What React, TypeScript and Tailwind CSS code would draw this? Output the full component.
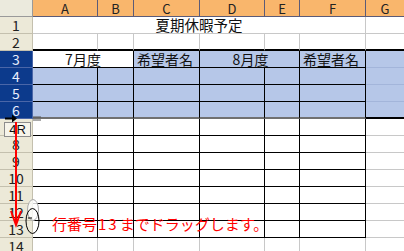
import React from 'react';

const font = "font-['Noto_Sans_CJK_JP','Liberation_Sans',sans-serif]";

function RowHead({ n, sel }: { n: number; sel?: boolean }) {
  return (
    <div
      className={
        sel
          ? 'flex items-center justify-center bg-[#0c3a8c] text-[#e8eefc] text-[14px] leading-none border-r border-b border-[#4a66a8]'
          : 'flex items-center justify-center bg-[#ece9d8] text-[#222] text-[14px] leading-none border-r border-b border-[#c4c0ae]'
      }
    >
      {n}
    </div>
  );
}

function ColHead({ label, last }: { label: string; last?: boolean }) {
  return (
    <div
      className={
        last
          ? 'flex items-center justify-center bg-[#f9b66c] text-[#222] text-[13px] leading-none border-b border-[#5b5b78]'
          : 'flex items-center justify-center bg-[#f9b66c] text-[#222] text-[13px] leading-none border-r border-b border-[#5b5b78]'
      }
    >
      {label}
    </div>
  );
}

export default function App() {
  const tableRows = [7, 8, 9, 10, 11, 12, 13];

  return (
    <div className={`relative w-[404px] h-[251px] overflow-hidden bg-white ${font}`}>
      <div className="grid grid-cols-[33px_65px_36px_66px_65px_35px_66px_38px] auto-rows-[17px]">
        {/* header */}
        <div className="bg-[#ebeadd] border-r border-b border-[#9a9a9a]" />
        <ColHead label="A" />
        <ColHead label="B" />
        <ColHead label="C" />
        <ColHead label="D" />
        <ColHead label="E" />
        <ColHead label="F" />
        <ColHead label="G" last />

        {/* row 1 */}
        <RowHead n={1} />
        <div className="col-span-6 flex items-center justify-center pt-[1px] text-[14.5px] leading-none text-[#111] border-r border-b border-[#c8c8c8]">
          夏期休暇予定
        </div>
        <div className="border-b border-[#c8c8c8]" />

        {/* row 2 */}
        <RowHead n={2} />
        <div className="border-r border-b-2 border-r-[#c8c8c8] border-b-black" />
        <div className="border-r border-b-2 border-r-[#c8c8c8] border-b-black" />
        <div className="border-r border-b-2 border-r-[#c8c8c8] border-b-black" />
        <div className="border-r border-b-2 border-r-[#c8c8c8] border-b-black" />
        <div className="border-r border-b-2 border-r-[#c8c8c8] border-b-black" />
        <div className="border-r border-b-2 border-r-[#c8c8c8] border-b-black" />
        <div className="border-b-2 border-b-black" />

        {/* row 3 */}
        <RowHead n={3} sel />
        <div className="col-span-2 flex items-center justify-center text-[14px] leading-none text-[#111] bg-white border-r border-b border-black">
          7月度
        </div>
        <div className="flex items-center pl-[3px] text-[14px] leading-none text-[#111] bg-[#b6c7e8] border-r border-b border-black">
          希望者名
        </div>
        <div className="col-span-2 flex items-center justify-center pl-[2px] text-[14px] leading-none text-[#111] bg-[#b6c7e8] border-r border-b border-black">
          8月度
        </div>
        <div className="flex items-center pl-[3px] text-[14px] leading-none text-[#111] bg-[#b6c7e8] border-r border-b border-black">
          希望者名
        </div>
        <div className="bg-[#b6c7e8] border-b border-[#a3b5da]" />

        {/* rows 4-5 */}
        {[4, 5].map((n) => (
          <React.Fragment key={n}>
            <RowHead n={n} sel />
            <div className="bg-[#b6c7e8] border-r border-b border-black" />
            <div className="bg-[#b6c7e8] border-r border-b border-black" />
            <div className="bg-[#b6c7e8] border-r border-b border-black" />
            <div className="bg-[#b6c7e8] border-r border-b border-black" />
            <div className="bg-[#b6c7e8] border-r border-b border-black" />
            <div className="bg-[#b6c7e8] border-r border-b border-black" />
            <div className="bg-[#b6c7e8] border-b border-[#a3b5da]" />
          </React.Fragment>
        ))}

        {/* row 6 */}
        <RowHead n={6} sel />
        <div className="bg-[#b6c7e8] border-r border-b-2 border-r-black border-b-[#707070]" />
        <div className="bg-[#b6c7e8] border-r border-b-2 border-r-black border-b-[#707070]" />
        <div className="bg-[#b6c7e8] border-r border-b-2 border-r-black border-b-[#707070]" />
        <div className="bg-[#b6c7e8] border-r border-b-2 border-r-black border-b-[#707070]" />
        <div className="bg-[#b6c7e8] border-r border-b-2 border-r-black border-b-[#707070]" />
        <div className="bg-[#b6c7e8] border-r border-b-2 border-r-black border-b-[#707070]" />
        <div className="bg-[#b6c7e8] border-b-2 border-b-black" />

        {/* rows 7-13 */}
        {tableRows.map((n) => (
          <React.Fragment key={n}>
            <RowHead n={n} />
            <div className="border-r border-b border-black" />
            <div className="border-r border-b border-black" />
            <div className="border-r border-b border-black" />
            <div className="border-r border-b border-black" />
            <div className="border-r border-b border-black" />
            <div className="border-r border-b border-black" />
            <div className="border-b border-[#c8c8c8]" />
          </React.Fragment>
        ))}

        {/* row 14 */}
        <RowHead n={14} />
        <div className="border-r border-b border-[#c8c8c8]" />
        <div className="border-r border-b border-[#c8c8c8]" />
        <div className="border-r border-b border-[#c8c8c8]" />
        <div className="border-r border-b border-[#c8c8c8]" />
        <div className="border-r border-b border-[#c8c8c8]" />
        <div className="border-r border-b border-[#c8c8c8]" />
        <div className="border-b border-[#c8c8c8]" />
      </div>

      {/* drag cursor */}
      <svg className="absolute left-[5px] top-[114px]" width="13" height="9" viewBox="0 0 13 9">
        <path d="M0 4.5H10" stroke="black" strokeWidth="2" />
        <path d="M7 0.5L12 4.5L7 8.5Z" fill="black" />
      </svg>
      <svg className="absolute left-[33px] top-[116px]" width="8" height="5" viewBox="0 0 8 5">
        <path d="M0 1H8M0 4H8" stroke="#555" strokeWidth="1" />
      </svg>

      {/* tooltip */}
      <div className="absolute left-[4px] top-[122px] w-[27px] h-[15px] flex items-center justify-center bg-[#f6f4ea] border border-[#8c8c8c] text-[13px] leading-none text-[#111] font-['Liberation_Sans',sans-serif]">
        4R
      </div>

      {/* red drag arrow */}
      <svg className="absolute left-0 top-[120px]" width="32" height="110" viewBox="0 0 32 110">
        <path d="M16 2V104" stroke="#ff0000" strokeWidth="2" />
        <path d="M11 91L16 105L21 91" stroke="#ff0000" strokeWidth="2" fill="none" />
      </svg>

      {/* mouse */}
      <svg className="absolute left-[24px] top-[198px]" width="18" height="38" viewBox="0 0 18 38">
        <ellipse cx="9" cy="12" rx="5.5" ry="10.5" fill="white" fillOpacity="0.8" stroke="#a8a8a8" strokeWidth="1" />
        <ellipse cx="8.5" cy="23" rx="6.5" ry="12.5" fill="none" stroke="black" strokeWidth="1" />
        <path d="M4 20H8" stroke="black" strokeWidth="1" />
      </svg>

      {/* instruction */}
      <div className="absolute left-[52px] top-[216px] text-[15px] leading-none text-[#ff0000] whitespace-nowrap">
        行番号<span className="px-[1px] tracking-[2px]">13</span>までドラッグします。
      </div>
    </div>
  );
}
